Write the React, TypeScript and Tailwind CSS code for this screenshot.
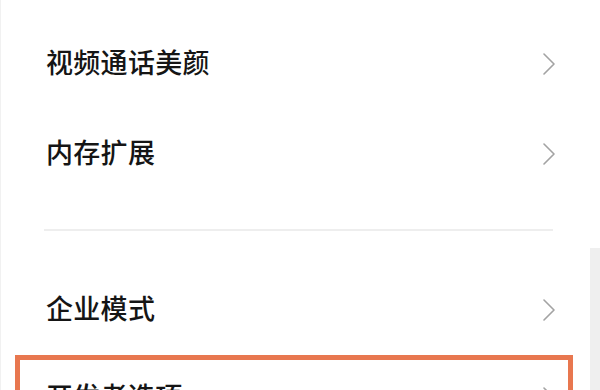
import React from "react";

function Chevron() {
  return (
    <svg width="12" height="22" viewBox="0 0 12 22" fill="none" className="shrink-0">
      <path d="M1 1 L11 11 L1 21" stroke="#a3a3a3" strokeWidth="1.6" strokeLinecap="round" strokeLinejoin="round" />
    </svg>
  );
}

function Row({ label, className }: { label: string; className: string }) {
  return (
    <div className={"flex items-center justify-between " + className}>
      <span className="pb-[6px] text-[27px] leading-none font-medium text-[#151515] tracking-[0.3px]">{label}</span>
      <Chevron />
    </div>
  );
}

export default function App() {
  return (
    <div
      className="relative w-[600px] h-[390px] overflow-hidden bg-white border-l border-[#f1f1f1]"
      style={{ fontFamily: '"Noto Sans CJK SC", "Noto Sans", sans-serif' }}
    >
      <div className="pt-[19px]">
        <Row label="视频通话美颜" className="h-[90px] pl-[45px] pr-[45px]" />
        <Row label="内存扩展" className="h-[90px] pl-[45px] pr-[45px]" />
        <div className="h-[66px] pt-[30px] pl-[43px] pr-[47px]">
          <div className="h-[2px] bg-[#eeeeee]" />
        </div>
        <Row label="企业模式" className="h-[90px] pl-[45px] pr-[45px]" />
        <div className="ml-[14px] mr-[27px] border-[5px] border-[#e8774f]">
          <Row label="开发者选项" className="h-[76px] pl-[26px] pr-[13px]" />
        </div>
      </div>
      <div className="absolute right-0 top-[248px] bottom-0 w-[10px] bg-[#efefef]" />
    </div>
  );
}
